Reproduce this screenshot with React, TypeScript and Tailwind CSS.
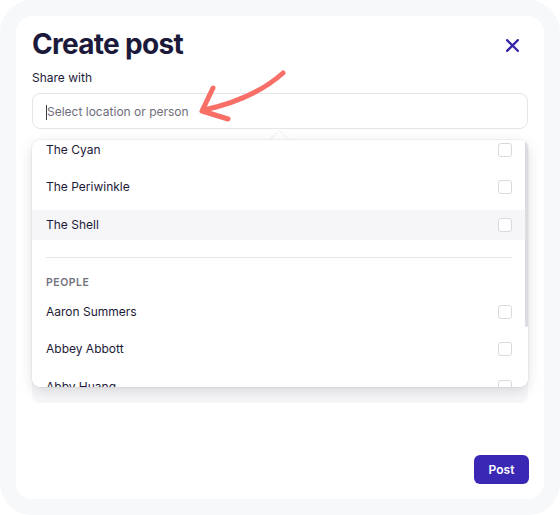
import React from "react";

function Checkbox() {
  return <div className="w-[14px] h-[14px] rounded-[3px] border border-[#d8d8de] bg-white shrink-0" />;
}

function Row({ label, active }: { label: string; active?: boolean }) {
  return (
    <div className={`h-[30px] flex items-center justify-between pl-[14px] pr-[16px] ${active ? "bg-[#f6f6f9]" : ""}`}>
      <span className="text-[12px] text-[#1c1a38]">{label}</span>
      <Checkbox />
    </div>
  );
}

export default function App() {
  return (
    <div className="w-[560px] h-[515px] bg-white relative" style={{ fontFamily: "Inter, 'Noto Sans', sans-serif" }}>
      <div className="h-full rounded-[32px] bg-[#f7f8fa] p-4">
        <div className="h-full rounded-[16px] bg-white flex flex-col px-4 pt-[10px] pb-[14px]">
          <div className="flex items-center justify-between">
            <h1 className="text-[28px] leading-[36px] font-bold text-[#1c1a3b] tracking-[-0.025em]">Create post</h1>
            <svg width="13" height="13" viewBox="0 0 13 13" className="mr-[9px] mt-[2px]">
              <path d="M1.2 1.2 L11.8 11.8 M11.8 1.2 L1.2 11.8" stroke="#3526a8" strokeWidth="2.3" strokeLinecap="square" />
            </svg>
          </div>
          <div className="mt-[8px] text-[12px] leading-[16px] text-[#1c1a38]">Share with</div>
          <div className="relative mt-[7px]">
            <div className="h-[36px] rounded-[8px] border border-[#e4e4ea] flex items-center pl-[13px] pt-[2px]">
              <span className="w-px h-[15px] bg-[#3a3a48]" />
              <span className="text-[12px] text-[#6e6e7a]">Select location or person</span>
            </div>
            <div className="absolute left-0 right-0 top-[47px] h-[247px] z-10">
              <div className="absolute left-[240px] -top-[6px] w-[14px] h-[14px] bg-white rotate-45 shadow-[-1px_-1px_2px_rgba(0,0,0,0.06)]" />
              <div className="relative h-full rounded-[8px] bg-white overflow-hidden shadow-[0_4px_14px_rgba(0,0,0,0.13),0_0_0_1px_rgba(0,0,0,0.04)]">
                <div className="absolute right-0 top-0 w-[3px] h-[187px] rounded-full bg-[#dcdce0]" />
                <div className="flex flex-col -mt-[5.5px]">
                  <div className="flex flex-col gap-[7.5px]">
                    <Row label="The Cyan" />
                    <Row label="The Periwinkle" />
                    <Row label="The Shell" active />
                  </div>
                  <div className="mt-[17px] ml-[14px] mr-[16px] h-px bg-[#e4e4ea]" />
                  <div className="mt-[18px] pl-[14px] text-[10.5px] leading-[14px] font-semibold tracking-[0.05em] text-[#737380]">PEOPLE</div>
                  <div className="mt-[7px] flex flex-col gap-[7.5px]">
                    <Row label="Aaron Summers" />
                    <Row label="Abbey Abbott" />
                    <Row label="Abby Huang" />
                  </div>
                </div>
              </div>
            </div>
          </div>
          <div className="relative mt-[12px] h-[262px] rounded-[8px] bg-[#f7f7f9]">
            <div className="absolute left-[185px] top-[244px] w-[11px] h-[2px] bg-[#3526a8]" />
          </div>
          <div className="flex-1" />
          <div className="flex justify-end -mr-[1px] pb-[1px]">
            <button className="h-[29px] w-[55px] rounded-[6px] bg-[#3a28b4] text-white text-[12px] font-semibold">Post</button>
          </div>
        </div>
      </div>
      <svg className="absolute left-0 top-0 pointer-events-none z-20" width="560" height="515">
        <path d="M283 73 Q254 99 204 110" fill="none" stroke="#f76f66" strokeWidth="5" strokeLinecap="round" />
        <path d="M213 88 L202 111 L228 119" fill="none" stroke="#f76f66" strokeWidth="5" strokeLinecap="round" strokeLinejoin="round" />
      </svg>
    </div>
  );
}
